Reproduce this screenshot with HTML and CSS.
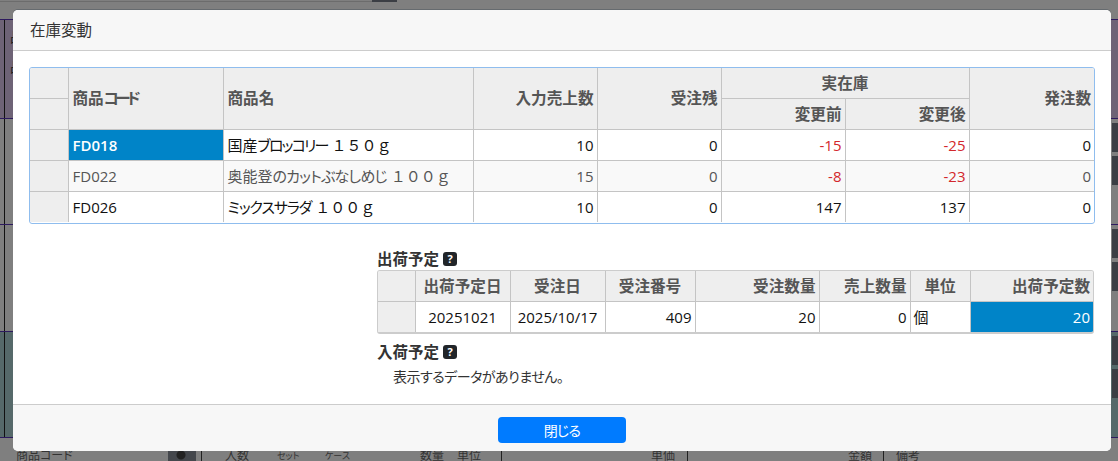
FILE: index.html
```html
<!DOCTYPE html>
<html lang="ja">
<head>
<meta charset="utf-8">
<title>在庫変動</title>
<link rel="stylesheet" href="styles.css">
</head>
<body>
<div class="backdrop">
  <div class="bg-top"><span class="bg-topline"></span><span class="bg-topbtn"></span></div>
  <div class="bg-row purple"><span class="bg-glyph">品</span><span class="bg-glyph">品</span></div>
  <div class="bg-row gray"><div class="bg-side"><i></i><i></i></div></div>
  <div class="bg-row gray short"><div class="bg-side"><i></i><i></i></div></div>
  <div class="bg-row teal"><div class="bg-side"><i></i><i></i></div></div>
  <div class="bg-head">
    <span class="h1">商品コード</span><span class="h2"></span><span class="h3">入数</span><span class="h4">セット</span><span class="h5">ケース</span><span class="h6">数量</span><span class="h7">単位</span><span class="h8">単価</span><span class="h9">金額</span><span class="h10">備考</span>
    <span class="sep s1"></span><span class="sep s2"></span><span class="sep s3"></span><span class="sep s4"></span>
  </div>
</div>

<section class="dialog">
  <header class="dlg-head">在庫変動</header>
  <div class="dlg-body">
    <div class="grid-wrap main-wrap">
      <table class="grid main">
        <colgroup><col class="c0"><col class="c1"><col class="c2"><col class="c3"><col class="c4"><col class="c5"><col class="c6"><col class="c7"></colgroup>
        <thead>
          <tr>
            <th class="corner top"></th>
            <th rowspan="2" class="l">商品<span class="kh">コード</span></th>
            <th rowspan="2" class="l">商品名</th>
            <th rowspan="2" class="r">入力売上数</th>
            <th rowspan="2" class="r">受注残</th>
            <th colspan="2" class="c">実在庫</th>
            <th rowspan="2" class="r">発注数</th>
          </tr>
          <tr>
            <th class="corner"></th>
            <th class="r">変更前</th>
            <th class="r">変更後</th>
          </tr>
        </thead>
        <tbody>
          <tr>
            <td class="corner"></td><td class="sel semi">FD018</td>
            <td>国産<span class="k1">ブロッコリー</span> １５０ｇ</td>
            <td class="r">10</td><td class="r">0</td><td class="r neg">-15</td><td class="r neg">-25</td><td class="r">0</td>
          </tr>
          <tr class="alt">
            <td class="corner"></td><td>FD022</td>
            <td>奥能登<span class="k2">のカットぶなしめじ</span> １００ｇ</td>
            <td class="r">15</td><td class="r">0</td><td class="r neg">-8</td><td class="r neg">-23</td><td class="r">0</td>
          </tr>
          <tr>
            <td class="corner"></td><td>FD026</td>
            <td><span class="k3">ミックスサラダ</span> １００ｇ</td>
            <td class="r">10</td><td class="r">0</td><td class="r">147</td><td class="r">137</td><td class="r">0</td>
          </tr>
        </tbody>
      </table>
    </div>

    <div class="side">
      <h3 class="sub first">出荷予定 <span class="help">?</span></h3>
      <div class="grid-wrap ship-wrap">
        <table class="grid ship">
          <colgroup><col class="d0"><col class="d1"><col class="d2"><col class="d3"><col class="d4"><col class="d5"><col class="d6"><col class="d7"></colgroup>
          <thead>
            <tr>
              <th class="corner"></th><th class="c">出荷予定日</th><th class="c">受注日</th><th class="c">受注番号</th><th class="r">受注数量</th><th class="r">売上数量</th><th class="c">単位</th><th class="r">出荷予定数</th>
            </tr>
          </thead>
          <tbody>
            <tr>
              <td class="corner"></td><td class="c">20251021</td><td class="c">2025/10/17</td><td class="r">409</td><td class="r">20</td><td class="r">0</td><td>個</td><td class="r sel">20</td>
            </tr>
          </tbody>
        </table>
      </div>
      <h3 class="sub second">入荷予定 <span class="help">?</span></h3>
      <p class="empty">表示するデータがありません。</p>
    </div>
  </div>
  <footer class="dlg-foot"><button class="close" type="button">閉じる</button></footer>
</section>
</body>
</html>
```
FILE: styles.css
```css
html, body { margin: 0; padding: 0; height: 461px; overflow: hidden; }
body {
  background: #7f7f7f;
  font-family: "Open Sans", "Noto Sans CJK JP", sans-serif;
  font-size: 15px;
  color: #212121;
  position: relative;
}

/* dimmed page behind the dialog */
.backdrop { height: 461px; display: flex; flex-direction: column; overflow: hidden; }
.bg-top { height: 19px; position: relative; }
.bg-topline { display: block; height: 1px; width: 372px; background: #6c6c6c; position: absolute; top: 1px; left: 0; }
.bg-topbtn { display: block; position: absolute; left: 372px; top: 0; width: 25px; height: 2px; background: #3b3e44; }
.bg-row {
  box-sizing: border-box;
  height: 106px;
  border-top: 1px solid #2d1a5e;
  background: linear-gradient(90deg, #7f7f7f 4px, #111 4px, #111 5px, #7f7f7f 5px);
  display: flex;
  justify-content: flex-end;
}
.bg-row.purple {
  height: 99px;
  background: linear-gradient(90deg, #6e6376 4px, #111 4px, #111 5px, #6e6376 5px);
  justify-content: flex-start;
  flex-direction: column;
  padding: 8px 0 0 10px;
  gap: 12px;
  color: #222;
}
.bg-row.short { height: 107px; }
.bg-row.teal {
  background: linear-gradient(90deg, #56696a 4px, #111 4px, #111 5px, #56696a 5px);
}
.bg-glyph { font-size: 14px; line-height: 18px; }
.bg-side { width: 6px; padding-top: 4px; display: flex; flex-direction: column; gap: 4px; }
.bg-side i { display: block; height: 29px; background: #3b3e44; }
.bg-head {
  flex: 1;
  border-top: 1px solid #2d1a5e;
  position: relative;
  font-size: 12px;
  color: #333;
  font-feature-settings: "palt";
}
.bg-head span { position: absolute; top: 12px; line-height: 12px; }
.h1 { left: 16px; }
.h2 { left: 168px; width: 28px; height: 12px; background: radial-gradient(circle at 13px 5px, #222 4px, #44474c 5px); }
.h3 { left: 225px; }
.h4 { left: 277px; font-size: 9px; }
.h5 { left: 325px; font-size: 9px; }
.h6 { left: 420px; }
.h7 { left: 457px; }
.h8 { left: 651px; }
.h9 { left: 848px; }
.h10 { left: 896px; }
.bg-head .sep { width: 1px; height: 12px; background: #222; }
.s1 { left: 201px; }
.s2 { left: 501px; }
.s3 { left: 687px; }
.s4 { left: 883px; }

/* dialog */
.dialog {
  position: absolute;
  left: 13px;
  top: 10px;
  width: 1098px;
  height: 441px;
  background: #fff;
  border-radius: 5px;
  display: flex;
  flex-direction: column;
  overflow: hidden;
  box-shadow: 0 -1px 0 #666b6f;
}
.dlg-head {
  height: 40px;
  background: #f7f7f7;
  border-bottom: 1px solid #ccc;
  padding-left: 17px;
  line-height: 40px;
  font-size: 15.5px;
  color: #333;
}
.dlg-body { flex: 1; padding: 16px 17px 0 16px; }
.dlg-foot {
  box-sizing: border-box;
  height: 47px;
  background: #f7f7f7;
  border-top: 1px solid #ccc;
  display: flex;
  justify-content: center;
  padding-top: 12px;
}
.close {
  width: 128px;
  height: 26px;
  border: 0;
  border-radius: 4px;
  background: #007bff;
  color: #fff;
  font: inherit;
  font-size: 14px;
  font-feature-settings: "palt";
  letter-spacing: -.8px;
  padding: 0;
}

/* grids */
.grid-wrap { box-sizing: border-box; overflow: hidden; border-radius: 3px; }
.main-wrap { width: 1066px; height: 157px; border: 1px solid #8fbdee; }
.ship-wrap { width: 717px; height: 64px; border: 1px solid #ccc; border-bottom-width: 2px; }
.grid { border-collapse: collapse; table-layout: fixed; width: 100%; }
.grid th, .grid td {
  border: 1px solid #c4c4c4;
  padding: 0 3px;
  height: 31px;
  box-sizing: border-box;
  line-height: 20px;
  white-space: nowrap;
  overflow: hidden;
}
.grid thead tr:first-child > * { border-top: 0; height: 30px; }
.grid tr:last-child > td { border-bottom: 0; }
.grid tr > *:first-child { border-left: 0; }
.grid tr > *:last-child { border-right: 0; }
.main .l, .main td:not(.r) { padding-left: 4px; }
.grid th {
  background: #eee;
  color: #555;
  font-weight: 600;
  font-size: 15.6px;
  text-align: left;
  font-feature-settings: "palt";
}
.grid .l { text-align: left; }
.grid .r { text-align: right; }
.grid .c { text-align: center; }
.grid .corner { background: #eee; }
.main thead .corner.top { border-bottom: 1px solid #c4c4c4; }
.grid td { color: #111; background: #fff; font-size: 15px; }
.grid .alt td { background: #f9f9f9; color: #555; }
.grid .alt td.corner, .grid td.corner { background: #eee; }
.grid td.sel { background: #0084c8; color: #fff; }
.grid td.semi { font-weight: 600; }
.grid td.neg, .grid .alt td.neg { color: #d3272c; }
.kh { font-feature-settings: "palt"; letter-spacing: -3.5px; }
.k1 { font-feature-settings: "palt"; letter-spacing: -1.8px; }
.k2 { font-feature-settings: "palt"; letter-spacing: -.8px; }
.k3 { font-feature-settings: "palt"; letter-spacing: -1.1px; }

.c0 { width: 38px; }
.c1 { width: 155px; }
.c2 { width: 250px; }
.c3 { width: 124px; }
.c4 { width: 124px; }
.c5 { width: 124px; }
.c6 { width: 124px; }
.d0 { width: 37px; }
.d1 { width: 95px; }
.d2 { width: 95px; }
.d3 { width: 90px; }
.d4 { width: 124px; }
.d5 { width: 91px; }
.d6 { width: 60px; }

/* lower block */
.side { margin-left: 348px; }
.sub {
  margin: 0;
  font-size: 15.5px;
  font-weight: 600;
  color: #333;
  line-height: 20px;
  display: flex;
  align-items: center;
  gap: 4px;
}
.sub.first { margin-top: 23px; height: 23px; }
.sub.second { margin-top: 7px; height: 22px; }
.help {
  width: 14px;
  height: 14px;
  border-radius: 3px;
  background: #212529;
  color: #fff;
  font-size: 11px;
  font-weight: 700;
  line-height: 14px;
  text-align: center;
  font-family: "Open Sans", sans-serif;
}
.empty { margin: 4px 0 0 16px; font-size: 14px; line-height: 20px; color: #333; font-feature-settings: "palt"; letter-spacing: -.5px; }
```
